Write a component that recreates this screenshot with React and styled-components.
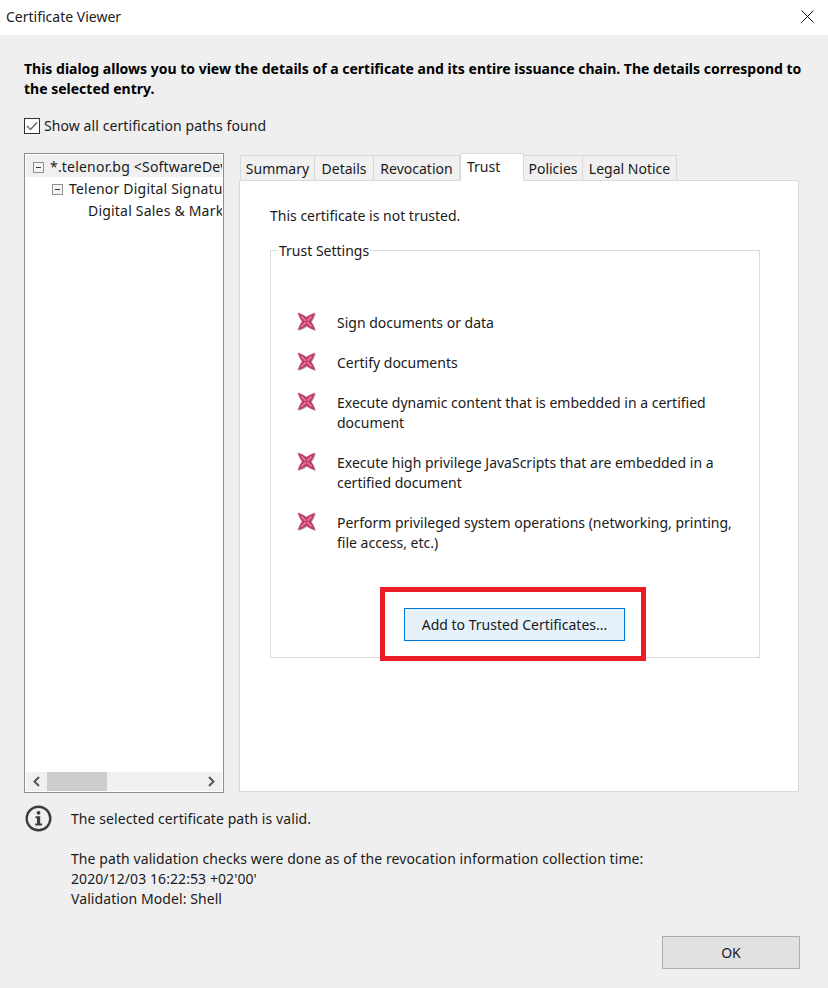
import * as React from "react";
import { createGlobalStyle, styled } from "styled-components";

const GlobalStyle = createGlobalStyle`
  html, body {
    margin: 0;
    padding: 0;
    background: #efefef;
  }
  body {
    font-family: "Noto Sans", "Open Sans", "Liberation Sans", sans-serif;
    font-size: 14px;
    line-height: 20px;
    color: #1a1a1a;
  }
`;

const Dialog = styled.div`
  width: 828px;
  height: 988px;
  display: flex;
  flex-direction: column;
  overflow: hidden;
`;

const TitleBar = styled.div`
  height: 35px;
  flex: none;
  background: #fff;
  display: flex;
  align-items: center;
  justify-content: space-between;
  padding: 0 14px 2px 6px;
  box-sizing: border-box;
`;

const Body = styled.div`
  flex: 1;
  display: flex;
  flex-direction: column;
  padding: 24px 28px 19px 24px;
`;

const Notice = styled.p`
  margin: 0;
  font-weight: 700;
  color: #000;
  width: 790px;
`;

const CheckRow = styled.label`
  display: flex;
  align-items: center;
  gap: 4px;
  margin-top: 17px;
  height: 20px;
  letter-spacing: 0.09px;
`;

const CheckBox = styled.span`
  width: 14px;
  height: 14px;
  border: 1px solid #333;
  background: #fff;
  display: flex;
  align-items: center;
  justify-content: center;
`;

const Main = styled.div`
  display: flex;
  gap: 15px;
  margin-top: 17px;
  height: 640px;
`;

const TreePane = styled.div`
  width: 196px;
  border: 1px solid #8a8d96;
  background: #fff;
  display: flex;
  flex-direction: column;
  padding: 1px;
`;

const TreeList = styled.div`
  flex: 1;
  overflow: hidden;
  letter-spacing: 0.2px;
`;

const TreeRow = styled.div`
  height: 22px;
  box-sizing: border-box;
  padding-top: 2px;
  display: flex;
  align-items: center;
  gap: 6px;
  padding-left: ${(props) => props.$indent}px;
  background: ${(props) => (props.$selected ? "#f0f0f0" : "transparent")};
  white-space: nowrap;
`;

const Expander = styled.span`
  width: 9px;
  height: 9px;
  flex: none;
  border: 1px solid #919191;
  background: #f3f3f3;
  position: relative;
  &::after {
    content: "";
    position: absolute;
    left: 2px;
    right: 2px;
    top: 4px;
    height: 1px;
    background: #333;
  }
`;

const ScrollBar = styled.div`
  height: 19px;
  flex: none;
  background: #f0f0f0;
  display: flex;
  align-items: center;
  justify-content: space-between;
`;

const ScrollButton = styled.span`
  width: 21px;
  display: flex;
  justify-content: center;
`;

const ScrollThumb = styled.span`
  width: 60px;
  height: 19px;
  background: #cdcdcd;
  margin-right: auto;
`;

const TabArea = styled.div`
  width: 560px;
  display: flex;
  flex-direction: column;
  padding-bottom: 1px;
`;

const TabStrip = styled.div`
  display: flex;
  align-items: flex-end;
  height: 28px;
  padding-left: 1px;
  position: relative;
  z-index: 1;
  margin-bottom: -1px;
`;

const Tab = styled.div`
  width: ${(props) => props.$width}px;
  box-sizing: border-box;
  height: ${(props) => (props.$active ? 28 : 26)}px;
  border: 1px solid #d9d9d9;
  border-left-width: ${(props) => (props.$first || props.$active ? 1 : 0)}px;
  border-bottom: ${(props) => (props.$active ? "1px solid #fff" : "1px solid #d9d9d9")};
  background: ${(props) => (props.$active ? "#fff" : "#f0f0f0")};
  text-align: ${(props) => (props.$active ? "left" : "center")};
  padding-left: ${(props) => (props.$active ? 6 : 0)}px;
  line-height: 26px;
  white-space: nowrap;
`;

const TabPanel = styled.div`
  flex: 1;
  background: #fff;
  border: 1px solid #d9d9d9;
  padding: 25px 38px 0 30px;
`;

const Status = styled.div`
  height: 20px;
`;

const TrustSet = styled.fieldset`
  margin: 13px 0 0;
  padding: 52px 26px 16px 26px;
  border: 1px solid #dcdcdc;
  height: 419px;
  box-sizing: border-box;
  display: flex;
  flex-direction: column;
`;

const TrustLegend = styled.legend`
  margin-left: -19px;
  padding: 2px 1px 0;
  line-height: 20px;
`;

const TrustList = styled.div`
  display: flex;
  flex-direction: column;
  gap: 20px;
`;

const TrustRow = styled.div`
  display: flex;
  gap: 20px;
  align-items: flex-start;
`;

const TrustText = styled.span`
  flex: 1;
`;

const ActionWrap = styled.div`
  align-self: center;
  margin: 55px 0 0 -1px;
  position: relative;
`;

const AddButton = styled.button`
  display: block;
  width: 221px;
  height: 33px;
  padding: 0;
  font: inherit;
  color: inherit;
  background: #e5f1fb;
  border: 1px solid #0078d7;
`;

const Highlight = styled.div`
  position: absolute;
  left: -24px;
  right: -21px;
  top: -21px;
  bottom: -20px;
  border: 5px solid #ed1c24;
  pointer-events: none;
`;

const Footer = styled.div`
  display: flex;
  gap: 19px;
  margin-top: 16px;
  padding-left: 1px;
  letter-spacing: 0.08px;
`;

const FooterText = styled.div`
  display: flex;
  flex-direction: column;
  gap: 20px;
`;

const Actions = styled.div`
  display: flex;
  justify-content: flex-end;
  margin-top: auto;
`;

const OkButton = styled.button`
  width: 138px;
  height: 33px;
  padding: 0;
  font: inherit;
  color: inherit;
  background: #e1e1e1;
  border: 1px solid #adadad;
`;

const crossShape =
  "M1 1 L6 3 L9.5 5.2 L13 3 L18 1 L16 6 L13.8 9.5 L16 13 L18 18 L13 16 L9.5 13.8 L6 16 L1 18 L3 13 L5.2 9.5 L3 6 Z";

function DenyIcon() {
  return (
    <svg width="20" height="20" viewBox="0 0 20 20" style={{ flex: "none", marginTop: -1 }}>
      <path d={crossShape} transform="translate(1 1)" fill="#9a9a9a" opacity="0.6" />
      <path d={crossShape} fill="#c43c66" stroke="#a83056" strokeWidth="0.5" />
      <path d="M4.5 4.5 L14.5 14.5 M14.5 4.5 L4.5 14.5" stroke="#e27d9b" strokeWidth="1.6" />
      <path d="M9.5 8 L11 9.5 L9.5 11 L8 9.5 Z" fill="#b8345e" />
    </svg>
  );
}

function InfoIcon() {
  return (
    <svg width="27" height="27" viewBox="0 0 27 27" style={{ flex: "none", marginTop: -4 }}>
      <circle cx="13.5" cy="13.5" r="11.8" fill="none" stroke="#3c3c3c" strokeWidth="2.4" />
      <circle cx="13.5" cy="7.8" r="1.9" fill="#3c3c3c" />
      <path d="M10.5 11.2 H15.2 V18.6 H17 V20.6 H10.2 V18.6 H12 V13.2 H10.5 Z" fill="#3c3c3c" />
    </svg>
  );
}

const trustItems = [
  ["Sign documents or data"],
  ["Certify documents"],
  ["Execute dynamic content that is embedded in a certified", "document"],
  ["Execute high privilege JavaScripts that are embedded in a", "certified document"],
  ["Perform privileged system operations (networking, printing,", "file access, etc.)"],
];

const tabs = [
  { label: "Summary", width: 75 },
  { label: "Details", width: 59 },
  { label: "Revocation", width: 86 },
  { label: "Trust", width: 64, active: true },
  { label: "Policies", width: 59 },
  { label: "Legal Notice", width: 94 },
];

export default function App() {
  return (
    <>
      <GlobalStyle />
      <Dialog>
        <TitleBar>
          <span>Certificate Viewer</span>
          <svg width="13" height="13" viewBox="0 0 13 13">
            <path d="M0.5 0.5 L12.5 12.5 M12.5 0.5 L0.5 12.5" stroke="#111" strokeWidth="1" />
          </svg>
        </TitleBar>
        <Body>
          <Notice>
            This dialog allows you to view the details of a certificate and its entire issuance chain. The details
            correspond to the selected entry.
          </Notice>
          <CheckRow>
            <CheckBox>
              <svg width="12" height="12" viewBox="0 0 12 12">
                <path d="M1 6 L4.5 9.5 L11 2.5" fill="none" stroke="#666" strokeWidth="1.4" />
              </svg>
            </CheckBox>
            Show all certification paths found
          </CheckRow>
          <Main>
            <TreePane>
              <TreeList>
                <TreeRow $indent={7} $selected>
                  <Expander />
                  *.telenor.bg &lt;SoftwareDev
                </TreeRow>
                <TreeRow $indent={26}>
                  <Expander />
                  Telenor Digital Signatu
                </TreeRow>
                <TreeRow $indent={62}>Digital Sales &amp; Mark</TreeRow>
              </TreeList>
              <ScrollBar>
                <ScrollButton>
                  <svg width="9" height="11" viewBox="0 0 9 11">
                    <path d="M7 1 L2.5 5.5 L7 10" fill="none" stroke="#555" strokeWidth="2" />
                  </svg>
                </ScrollButton>
                <ScrollThumb />
                <ScrollButton>
                  <svg width="9" height="11" viewBox="0 0 9 11">
                    <path d="M2 1 L6.5 5.5 L2 10" fill="none" stroke="#555" strokeWidth="2" />
                  </svg>
                </ScrollButton>
              </ScrollBar>
            </TreePane>
            <TabArea>
              <TabStrip>
                {tabs.map((tab, index) => (
                  <Tab key={tab.label} $width={tab.width} $active={tab.active} $first={index === 0}>
                    {tab.label}
                  </Tab>
                ))}
              </TabStrip>
              <TabPanel>
                <Status>This certificate is not trusted.</Status>
                <TrustSet>
                  <TrustLegend>Trust Settings</TrustLegend>
                  <TrustList>
                    {trustItems.map((lines) => (
                      <TrustRow key={lines[0]}>
                        <DenyIcon />
                        <TrustText>
                          {lines.map((line) => (
                            <div key={line}>{line}</div>
                          ))}
                        </TrustText>
                      </TrustRow>
                    ))}
                  </TrustList>
                  <ActionWrap>
                    <AddButton>Add to Trusted Certificates...</AddButton>
                    <Highlight />
                  </ActionWrap>
                </TrustSet>
              </TabPanel>
            </TabArea>
          </Main>
          <Footer>
            <InfoIcon />
            <FooterText>
              <div>The selected certificate path is valid.</div>
              <div>
                <div>The path validation checks were done as of the revocation information collection time:</div>
                <div>2020/12/03 16:22:53 +02'00'</div>
                <div>Validation Model: Shell</div>
              </div>
            </FooterText>
          </Footer>
          <Actions>
            <OkButton>OK</OkButton>
          </Actions>
        </Body>
      </Dialog>
    </>
  );
}
